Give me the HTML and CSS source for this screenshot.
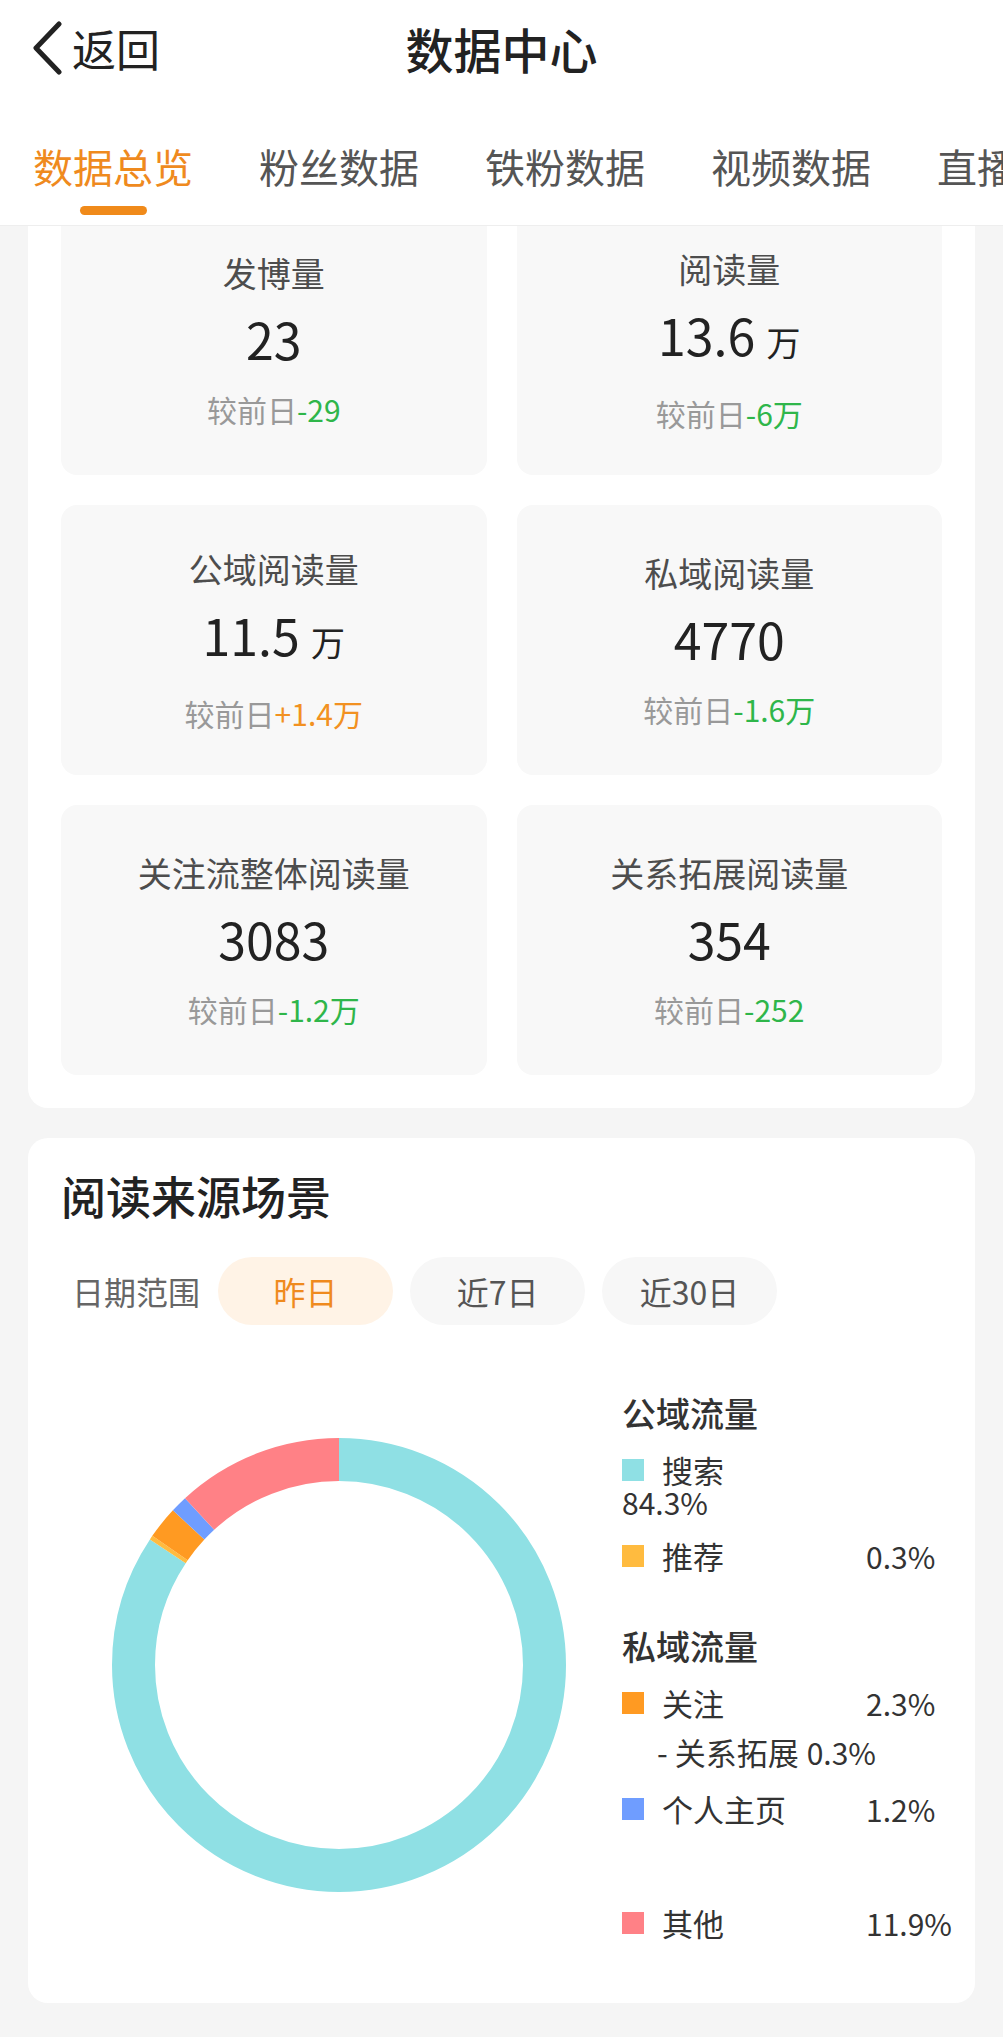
FILE: index.html
```html
<!DOCTYPE html>
<html lang="zh-CN">
  <head>
    <meta charset="UTF-8" />
    <meta name="viewport" content="width=device-width, initial-scale=1.0" />
    <title>数据中心</title>
    <link rel="stylesheet" href="styles.css">
  </head>
  <body>
    <header>
      <nav class="topbar">
        <a class="back" href="#">
          <svg width="32" height="54" viewBox="0 0 32 54"><path d="M28 3 L5 27 L28 51" /></svg>
          <span>返回</span>
        </a>
        <h1>数据中心</h1>
        <span></span>
      </nav>
      <ul class="tabs">
        <li class="active">数据总览</li>
        <li>粉丝数据</li>
        <li>铁粉数据</li>
        <li>视频数据</li>
        <li>直播数据</li>
      </ul>
    </header>

    <main class="scroll">
      <!-- 概览卡片 -->
      <section class="panel stats">
        <div class="stat">
          <div class="stat-label">发博量</div>
          <div class="stat-value">23</div>
          <div class="stat-diff">较前日<span class="down">-29</span></div>
        </div>
        <div class="stat">
          <div class="stat-label">阅读量</div>
          <div class="stat-value">13.6 <span class="unit">万</span></div>
          <div class="stat-diff">较前日<span class="down">-6万</span></div>
        </div>
        <div class="stat">
          <div class="stat-label">公域阅读量</div>
          <div class="stat-value">11.5 <span class="unit">万</span></div>
          <div class="stat-diff">较前日<span class="up">+1.4万</span></div>
        </div>
        <div class="stat">
          <div class="stat-label">私域阅读量</div>
          <div class="stat-value">4770</div>
          <div class="stat-diff">较前日<span class="down">-1.6万</span></div>
        </div>
        <div class="stat">
          <div class="stat-label">关注流整体阅读量</div>
          <div class="stat-value">3083</div>
          <div class="stat-diff">较前日<span class="down">-1.2万</span></div>
        </div>
        <div class="stat">
          <div class="stat-label">关系拓展阅读量</div>
          <div class="stat-value">354</div>
          <div class="stat-diff">较前日<span class="down">-252</span></div>
        </div>
      </section>

      <!-- 阅读来源 -->
      <section class="panel source">
        <h2>阅读来源场景</h2>
        <div class="range">
          <span class="range-label">日期范围</span>
          <span class="pill active">昨日</span>
          <span class="pill">近7日</span>
          <span class="pill">近30日</span>
        </div>

        <div class="chart">
          <div class="donut">
            <svg width="454" height="454" viewBox="0 0 454 454">
              <g transform="rotate(-90 227 227)" fill="none" stroke-width="43">
                <circle cx="227" cy="227" r="205.5" stroke="#8fe0e4" stroke-dasharray="1088.47 1291.19" stroke-dashoffset="0" />
                <circle cx="227" cy="227" r="205.5" stroke="#ffbb3f" stroke-dasharray="3.87 1291.19" stroke-dashoffset="-1088.47" />
                <circle cx="227" cy="227" r="205.5" stroke="#ff9a22" stroke-dasharray="29.70 1291.19" stroke-dashoffset="-1092.34" />
                <circle cx="227" cy="227" r="205.5" stroke="#6f9dff" stroke-dasharray="15.49 1291.19" stroke-dashoffset="-1122.04" />
                <circle cx="227" cy="227" r="205.5" stroke="#ff8186" stroke-dasharray="153.65 1291.19" stroke-dashoffset="-1137.54" />
              </g>
            </svg>
          </div>

          <div class="legend">
            <h3>公域流量</h3>
            <div class="item wrap"><i class="sq cyan"></i><span class="name">搜索</span><span class="pct">84.3%</span></div>
            <div class="item"><i class="sq yellow"></i><span class="name">推荐</span><span class="pct">0.3%</span></div>

            <h3 class="group">私域流量</h3>
            <div class="item"><i class="sq orange"></i><span class="name">关注</span><span class="pct">2.3%</span></div>
            <div class="item sub">- 关系拓展 <span class="pct">0.3%</span></div>
            <div class="item"><i class="sq blue"></i><span class="name">个人主页</span><span class="pct">1.2%</span></div>

            <div class="item other"><i class="sq red"></i><span class="name">其他</span><span class="pct">11.9%</span></div>
          </div>
        </div>
      </section>
    </main>
  </body>
</html>
```

FILE: styles.css
```css
body {
  margin: 0;
  padding: 0;
  background-color: #f5f5f5;
  font-family: "Noto Sans CJK SC", "Noto Sans", sans-serif;
  color: #333;
}

header {
  background-color: #fff;
  border-bottom: 1px solid #eeeeee;
}

.topbar {
  display: grid;
  grid-template-columns: 1fr auto 1fr;
  align-items: center;
  height: 96px;
}
.topbar h1 {
  margin: 0;
  font-size: 48px;
  font-weight: 500;
  color: #222;
}
.back {
  display: flex;
  align-items: center;
  gap: 9px;
  padding-left: 31px;
  color: #222;
  text-decoration: none;
  font-size: 44px;
}
.back svg path {
  fill: none;
  stroke: #222;
  stroke-width: 5;
  stroke-linecap: round;
  stroke-linejoin: round;
}

.tabs {
  list-style: none;
  display: flex;
  gap: 66px;
  margin: 0;
  padding: 42px 0 10px 33px;
  overflow: hidden;
  white-space: nowrap;
}
.tabs li {
  flex-shrink: 0;
  font-size: 40px;
  line-height: 56px;
  color: #555;
}
.tabs li::after {
  content: "";
  display: block;
  width: 67px;
  height: 9px;
  margin: 12px auto 0;
  border-radius: 5px;
}
.tabs li.active {
  color: #ef8a1e;
}
.tabs li.active::after {
  background-color: #f08a1a;
}

.scroll {
  height: calc(100vh - 227px);
  overflow: hidden;
}

.panel {
  margin: 0 28px;
  background-color: #fff;
  border-radius: 20px;
}

.stats {
  margin-top: -54px;
  padding: 33px;
  display: grid;
  grid-template-columns: 1fr 1fr;
  gap: 30px;
}
.stat {
  height: 270px;
  background-color: #f8f8f8;
  border-radius: 16px;
  display: flex;
  flex-direction: column;
  align-items: center;
  justify-content: center;
}
.stat-label {
  font-size: 34px;
  line-height: 44px;
  color: #4d4d4d;
}
.stat-value {
  margin-top: 13px;
  font-size: 50px;
  line-height: 60px;
  font-weight: 400;
  color: #222;
}
.stat-value .unit {
  font-size: 34px;
}
.stat-diff {
  margin-top: 21px;
  font-size: 30px;
  line-height: 40px;
  color: #999;
}
.down {
  color: #2fb64a;
}
.up {
  color: #f29121;
}

.source {
  margin-top: 30px;
  padding: 30px 33px 38px;
}
.source h2 {
  margin: 0;
  font-size: 45px;
  line-height: 56px;
  font-weight: 500;
  color: #222;
}

.range {
  display: flex;
  align-items: center;
  gap: 17px;
  margin-top: 33px;
  padding-left: 11px;
}
.range-label {
  font-size: 32px;
  color: #666;
  margin-right: 1px;
}
.pill {
  width: 175px;
  height: 68px;
  border-radius: 34px;
  background-color: #f7f7f7;
  color: #555;
  font-size: 32px;
  display: flex;
  align-items: center;
  justify-content: center;
}
.pill.active {
  background-color: #fff3e6;
  color: #ef8a1e;
}

.chart {
  display: flex;
  align-items: center;
  height: 600px;
  margin-top: 40px;
}
.donut {
  flex-shrink: 0;
  width: 556px;
  display: flex;
  justify-content: center;
}
.donut svg {
  display: block;
}

.legend {
  flex: 1;
  min-width: 0;
  margin-left: 5px;
  color: #333;
}
.legend h3 {
  margin: 0;
  font-size: 34px;
  line-height: 44px;
  font-weight: 500;
}
.legend h3.group {
  margin-top: 52px;
}
.item {
  display: flex;
  align-items: center;
  margin-top: 22px;
  font-size: 31px;
  line-height: 32px;
  white-space: nowrap;
}
h3 + .item {
  margin-top: 19px;
}
.item .sq {
  flex-shrink: 0;
  width: 22px;
  height: 22px;
  margin-right: 18px;
}
.item .name {
  flex-shrink: 0;
  width: 204px;
}
.item .pct {
  font-size: 30px;
}
.item.wrap {
  flex-wrap: wrap;
}
.item.wrap .pct {
  width: 100%;
}
.item.sub {
  margin-top: 17px;
  padding-left: 35px;
}
.item.sub .pct {
  margin-left: 8px;
}
.item.sub + .item {
  margin-top: 25px;
}
.item.other {
  margin-top: 82px;
}

.cyan { background-color: #8fe0e4; }
.yellow { background-color: #ffbb3f; }
.orange { background-color: #ff9a22; }
.blue { background-color: #6f9dff; }
.red { background-color: #ff8186; }
```
